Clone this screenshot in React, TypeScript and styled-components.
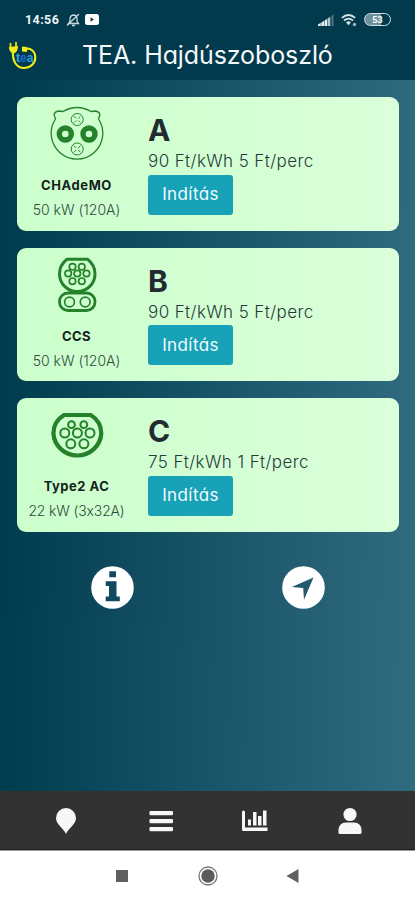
import React from "react";
import styled, { createGlobalStyle } from "styled-components";

const GlobalStyle = createGlobalStyle`
  * { box-sizing: border-box; }
  body { margin: 0; }
`;

const Screen = styled.div`
  width: 415px;
  height: 900px;
  display: flex;
  flex-direction: column;
  overflow: hidden;
  font-family: Inter, "Open Sans", sans-serif;
  font-feature-settings: "cv11", "calt" 0;
  background: #fff;
`;

const StatusBar = styled.div`
  height: 38px;
  flex: none;
  display: flex;
  align-items: center;
  justify-content: space-between;
  padding: 1px 24px 0 25px;
  background: #003a4c;
  color: #eef4f6;
`;

const StatusGroup = styled.div<{ $gap: number }>`
  display: flex;
  align-items: center;
  gap: ${(p) => p.$gap}px;
`;

const Clock = styled.span`
  width: 36px;
  font: 700 12.5px/16px Roboto, sans-serif;
  letter-spacing: 0.4px;
  white-space: nowrap;
`;

const Header = styled.header`
  height: 42px;
  flex: none;
  display: flex;
  padding-left: 8px;
  background: #003a4c;
`;

const Title = styled.h1`
  margin: 0 0 0 44px;
  font-size: 25px;
  line-height: 34px;
  font-weight: 400;
  letter-spacing: -0.1px;
  color: #f4f8fa;
  white-space: nowrap;
`;

const Main = styled.main`
  height: 711px;
  flex: none;
  padding: 17px 16px 0 17px;
  background: linear-gradient(91deg, #003a4d 0%, #195367 50%, #316b80 100%);
`;

const CardList = styled.div`
  display: flex;
  flex-direction: column;
  gap: 17px;
`;

const Card = styled.section`
  height: 133.5px;
  display: flex;
  border-radius: 9px;
  background: linear-gradient(90deg, #ccffcc 0%, #daffda 100%);
`;

const Connector = styled.div`
  width: 119px;
  padding-top: 8px;
  display: flex;
  flex-direction: column;
  align-items: center;
  color: #25812a;
`;

const ConnectorName = styled.div<{ $spacing: number }>`
  margin-top: 10.4px;
  font-size: 13px;
  line-height: 20px;
  font-weight: 700;
  letter-spacing: ${(p) => p.$spacing}px;
  color: #14231d;
  white-space: nowrap;
`;

const Power = styled.div<{ $spacing: number }>`
  margin-top: 5px;
  font-size: 14px;
  line-height: 20px;
  font-weight: 300;
  letter-spacing: ${(p) => p.$spacing}px;
  color: #2d4a42;
  white-space: nowrap;
`;

const Tariff = styled.div`
  padding: 17px 0 0 12px;
`;

const Letter = styled.div`
  font-size: 30px;
  line-height: 32px;
  font-weight: 700;
  color: #212b31;
`;

const Price = styled.div`
  margin-top: 3px;
  font-size: 17px;
  line-height: 24px;
  font-weight: 300;
  letter-spacing: 0.4px;
  color: #273a3a;
  white-space: nowrap;
`;

const StartButton = styled.button`
  display: block;
  width: 85px;
  height: 40px;
  margin: 1.5px 0 0;
  padding: 0 0 1px;
  border: 0;
  border-radius: 3px;
  background: #17a2b8;
  color: #f2fbfd;
  font: inherit;
  font-feature-settings: inherit;
  font-size: 17px;
  letter-spacing: 0.4px;
`;

const Actions = styled.div`
  display: flex;
  gap: 147px;
  padding: 34.5px 0 0 74px;
`;

const ActionButton = styled.button`
  width: 44px;
  height: 44px;
  padding: 0;
  border: 0;
  background: none;
`;

const TabBar = styled.nav`
  height: 59px;
  flex: none;
  display: flex;
  align-items: center;
  justify-content: space-between;
  padding: 1px 50px 0 51px;
  background: #323232;
  border-bottom: 1px solid #1f1f1f;
`;

const TabButton = styled.button`
  width: 30px;
  height: 30px;
  padding: 0;
  border: 0;
  background: none;
`;

const SystemBar = styled.div`
  height: 50px;
  flex: none;
  display: flex;
  align-items: center;
  justify-content: center;
  gap: 66px;
  border-top: 1px solid #9c9c9c;
`;

const Drawing = styled.svg`
  display: block;
  flex: none;
`;

const ChademoIcon = () => (
  <Drawing width="60" height="60" viewBox="0 0 60 60" fill="none" stroke="currentColor">
    <path
      d="M8.5 14 L7 9.5 Q8 6.5 11.500 6 L16 6.500 Q30 -1.500 44 6.500 L48.500 6 Q52 6.500 53 9.500 L51.500 14 A25.800 25.800 0 1 1 8.500 14Z"
      strokeWidth="1.300"
    />
    <circle cx="18.300" cy="29" r="6" strokeWidth="5.400" />
    <circle cx="42" cy="29" r="6" strokeWidth="5.400" />
    <g strokeWidth="1">
      <circle cx="30.200" cy="14.500" r="6" />
      <path d="M27 11.300l6.400 6.400M33.400 11.300l-6.400 6.400" strokeDasharray="3 3" />
      <circle cx="30.200" cy="44" r="6" />
      <path d="M27 40.800l6.400 6.400M33.400 40.800l-6.400 6.400" strokeDasharray="3 3" />
    </g>
  </Drawing>
);

const CcsIcon = () => (
  <Drawing width="60" height="60" viewBox="0 0 60 60" fill="none" stroke="currentColor">
    <path d="M20 3.300 H40.500 Q48 9 48 18 A17.700 17.500 0 0 1 12.500 18 Q12.500 9 20 3.300Z" strokeWidth="3" />
    <rect x="12.500" y="37" width="35.500" height="17.500" rx="8.500" strokeWidth="2.800" />
    <g strokeWidth="1.700">
      {[[25.5, 10.8], [34.8, 10.8], [21.2, 17.5], [30.3, 17.5], [39.5, 17.5], [25.5, 25.2], [34.8, 25.2]].map(([x, y]) => (
        <circle key={`${x}-${y}`} cx={x} cy={y} r="3.200" />
      ))}
      <circle cx="22.500" cy="46" r="4.900" />
      <circle cx="38.200" cy="46" r="4.900" />
    </g>
  </Drawing>
);

const Type2Icon = () => (
  <Drawing width="60" height="60" viewBox="0 0 60 60" fill="none" stroke="currentColor">
    <path d="M17 9 H43.700 Q54.300 15.500 54.300 27.500 A24 23.500 0 0 1 6.400 27.500 Q6.400 15.500 17 9Z" strokeWidth="4.200" />
    <g strokeWidth="2">
      {[[24.5, 18.7], [36.8, 18.7]].map(([x, y]) => (
        <circle key={x} cx={x} cy={y} r="3.400" />
      ))}
      {[[17.8, 27], [30.4, 27], [43, 27], [23.8, 37.8], [36.9, 37.8]].map(([x, y]) => (
        <circle key={x} cx={x} cy={y} r="4.500" />
      ))}
    </g>
  </Drawing>
);

const LogoText = styled.text`
  font: 700 12px "Liberation Sans", sans-serif;
`;

const Logo = () => (
  <Drawing width="30" height="32" viewBox="0 0 30 32">
    <g fill="none" stroke="#f3ea17" strokeLinecap="round">
      <path d="M2.500 5.500V9M8 4.500V8" strokeWidth="1.700" />
      <path d="M5 12 C4 24 9 30 16 30 C23 30 27.300 25 27.300 19.500 C27.300 13 22 9.500 17.500 11" strokeWidth="2.100" />
    </g>
    <path d="M.8 9 L10 8 Q10 13 7 15 H4 Q1.200 13.500 .8 9ZM14 8.500 L19 9 V14 L14 13.500Z" fill="#f3ea17" />
    <LogoText x="8" y="24" textLength="17.500" lengthAdjust="spacingAndGlyphs">
      <tspan fill="#36a5dc">t</tspan>
      <tspan fill="#1769d2">e</tspan>
      <tspan fill="#2c9ad8">a</tspan>
    </LogoText>
  </Drawing>
);

const MutedBell = () => (
  <Drawing width="14" height="14" viewBox="0 0 14 14" fill="none" stroke="#c9d7dc" strokeWidth="1.300">
    <path d="M2.500 10.500 L4 8.500 V5.500 Q4.500 2 8 2 Q11 2.500 11 6 V8.500 L12.500 10.500ZM6 12.500H9M1 12.500L13 1" />
  </Drawing>
);

const VideoBadge = () => (
  <Drawing width="14" height="11" viewBox="0 0 14 11">
    <rect width="14" height="11" rx="2.500" fill="#fff" />
    <path d="M5.500 3.300 9 5.500 5.500 7.700Z" fill="#123e4d" />
  </Drawing>
);

const Signal = () => (
  <Drawing width="16" height="12" viewBox="0 0 16 12">
    <path d="M0 12V10.500L2.800 8.700V12ZM3.300 12V8.500L6.300 6.700V12ZM6.800 12V6.200L9.300 4.700V12Z" fill="#e4edf0" />
    <path d="M9.800 12V4.200L12.300 2.700V12Z" fill="#b5c6cd" />
    <path d="M13.500 12V1.800L15.500 .5V12Z" fill="#4f7684" />
  </Drawing>
);

const Wifi = () => (
  <Drawing width="16" height="14" viewBox="0 0 16 14" fill="none" stroke="#d8e4e8">
    <path d="M.8 4.800Q7.500 -.8 14.200 4.800" strokeWidth="1.700" />
    <path d="M3 7.500Q7.500 3.700 12 7.500" strokeWidth="1.700" />
    <path d="M5 9.300Q7.500 7.300 10 9.300L7.500 12.200Z" fill="#d8e4e8" stroke="none" />
    <circle cx="13.500" cy="11.500" r="1.700" fill="#9db5bf" stroke="none" />
  </Drawing>
);

const BatteryPill = styled.span`
  width: 27px;
  height: 13px;
  display: flex;
  align-items: center;
  justify-content: center;
  border: 1.500px solid #d3dfe4;
  border-radius: 7px;
  background: linear-gradient(90deg, #6f909c 0 62%, #003a4c 62%);
  color: #fff;
  font: 700 9px/10px Roboto, sans-serif;
`;

const InfoIcon = () => (
  <Drawing width="44" height="44" viewBox="0 0 44 44">
    <circle cx="21.500" cy="21.500" r="21.300" fill="#fff" />
    <path d="M18.300 5.200H25V11.300H18.300ZM14.700 15.200H25.500V30.500H28.800V35.300H14.700V30.500H18V20H14.700Z" fill="#11495e" />
  </Drawing>
);

const NavigateIcon = () => (
  <Drawing width="44" height="44" viewBox="0 0 44 44">
    <circle cx="21.500" cy="21.500" r="21.300" fill="#fff" />
    <path d="M31.500 11.500 L22 33.800 L21.200 22 L9.800 21Z" fill="#26596f" />
  </Drawing>
);

const chargers = [
  { id: "A", name: "CHAdeMO", nameSpacing: 0.6, power: "50 kW (120A)", powerSpacing: 0, price: "90 Ft/kWh 5 Ft/perc", Icon: ChademoIcon },
  { id: "B", name: "CCS", nameSpacing: 0.5, power: "50 kW (120A)", powerSpacing: 0, price: "90 Ft/kWh 5 Ft/perc", Icon: CcsIcon },
  { id: "C", name: "Type2 AC", nameSpacing: 0.5, power: "22 kW (3x32A)", powerSpacing: -0.15, price: "75 Ft/kWh 1 Ft/perc", Icon: Type2Icon },
];

export default function App() {
  return (
    <Screen>
      <GlobalStyle />
      <StatusBar>
        <StatusGroup $gap={5}>
          <Clock>14:56</Clock>
          <MutedBell />
          <VideoBadge />
        </StatusGroup>
        <StatusGroup $gap={7}>
          <Signal />
          <Wifi />
          <BatteryPill>53</BatteryPill>
        </StatusGroup>
      </StatusBar>
      <Header>
        <Logo />
        <Title>TEA. Hajdúszoboszló</Title>
      </Header>
      <Main>
        <CardList>
          {chargers.map(({ id, name, nameSpacing, power, powerSpacing, price, Icon }) => (
            <Card key={id}>
              <Connector>
                <Icon />
                <ConnectorName $spacing={nameSpacing}>{name}</ConnectorName>
                <Power $spacing={powerSpacing}>{power}</Power>
              </Connector>
              <Tariff>
                <Letter>{id}</Letter>
                <Price>{price}</Price>
                <StartButton>Indítás</StartButton>
              </Tariff>
            </Card>
          ))}
        </CardList>
        <Actions>
          <ActionButton aria-label="Info"><InfoIcon /></ActionButton>
          <ActionButton aria-label="Navigate"><NavigateIcon /></ActionButton>
        </Actions>
      </Main>
      <TabBar>
        <TabButton aria-label="Map">
          <Drawing width="30" height="30" viewBox="0 0 30 30">
            <path d="M15 28C12.500 22 5 18.500 5 12A10 10 0 0 1 25 12C25 18.500 17.500 22 15 28Z" fill="#f7f7f7" />
          </Drawing>
        </TabButton>
        <TabButton aria-label="List">
          <Drawing width="30" height="30" viewBox="0 0 30 30" fill="#f7f7f7">
            <rect x="3.500" y="5" width="23.500" height="4.300" rx="1" />
            <rect x="3.500" y="13" width="23.500" height="4.300" rx="1" />
            <rect x="3.500" y="21" width="23.500" height="4.300" rx="1" />
          </Drawing>
        </TabButton>
        <TabButton aria-label="Statistics">
          <Drawing width="30" height="30" viewBox="0 0 30 30" fill="#f7f7f7">
            <path d="M2 6Q2 4.500 3.500 4.500T5 6V21.500H27.500V25H3.500Q2 25 2 23.500ZM8 13.500H11V19.500H8ZM13 6H16.500V19.500H13ZM18 10H21.500V19.500H18ZM23 4.500H26.500V19.500H23Z" />
          </Drawing>
        </TabButton>
        <TabButton aria-label="Profile">
          <Drawing width="30" height="30" viewBox="0 0 30 30" fill="#f7f7f7">
            <circle cx="15" cy="8.500" r="6.600" />
            <path d="M3.500 27V24Q4 16.500 11 16.500H19Q26 16.500 26.500 24V27Q26.500 28 25 28H5Q3.500 28 3.500 27Z" />
          </Drawing>
        </TabButton>
      </TabBar>
      <SystemBar>
        <Drawing width="20" height="20" viewBox="0 0 20 20">
          <rect x="4" y="4" width="12" height="12" fill="#606060" />
        </Drawing>
        <Drawing width="20" height="20" viewBox="0 0 20 20">
          <circle cx="10" cy="10" r="9" fill="none" stroke="#777" strokeWidth="1.300" />
          <circle cx="10" cy="10" r="6.700" fill="#5c5c5c" />
        </Drawing>
        <Drawing width="20" height="20" viewBox="0 0 20 20">
          <path d="M14.500 3V17L2.500 10Z" fill="#606060" />
        </Drawing>
      </SystemBar>
    </Screen>
  );
}
